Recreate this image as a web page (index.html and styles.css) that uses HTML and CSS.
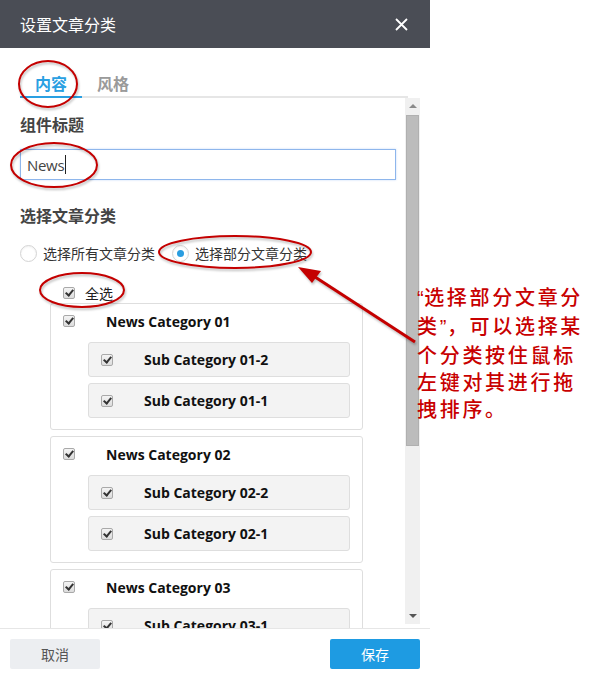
FILE: index.html
```html
<!DOCTYPE html>
<html lang="zh-CN">
<head>
    <meta charset="UTF-8">
    <meta name="viewport" content="width=device-width, initial-scale=1.0">
    <title>设置文章分类</title>
    <link rel="stylesheet" href="styles.css">
</head>
<body>
    <div class="page">
        <div class="dialog">
            <header class="dlg-head">
                <h1>设置文章分类</h1>
                <span class="close">
                    <svg width="13" height="13" viewBox="0 0 13 13"><path d="M1 1 L12 12 M12 1 L1 12" stroke="#fff" stroke-width="1.8" fill="none"/></svg>
                </span>
            </header>
            <div class="tabs">
                <a href="#" class="tab active">内容</a>
                <a href="#" class="tab">风格</a>
            </div>
            <div class="dlg-body">
                <div class="pane">
                    <h2 class="field-title">组件标题</h2>
                    <div class="input">News<span class="caret"></span></div>

                    <h2 class="field-title gap">选择文章分类</h2>
                    <div class="radios">
                        <label class="radio"><span class="dot"></span>选择所有文章分类</label>
                        <label class="radio on"><span class="dot"></span>选择部分文章分类</label>
                    </div>

                    <div class="cat-list">
                        <div class="row check-all"><span class="cb"></span><span class="cb-text">全选</span></div>

                        <div class="cat">
                            <div class="row cat-head"><span class="cb"></span><span class="name">News Category 01</span></div>
                            <div class="sub"><span class="cb"></span><span class="name">Sub Category 01-2</span></div>
                            <div class="sub"><span class="cb"></span><span class="name">Sub Category 01-1</span></div>
                        </div>
                        <div class="cat">
                            <div class="row cat-head"><span class="cb"></span><span class="name">News Category 02</span></div>
                            <div class="sub"><span class="cb"></span><span class="name">Sub Category 02-2</span></div>
                            <div class="sub"><span class="cb"></span><span class="name">Sub Category 02-1</span></div>
                        </div>
                        <div class="cat">
                            <div class="row cat-head"><span class="cb"></span><span class="name">News Category 03</span></div>
                            <div class="sub"><span class="cb"></span><span class="name">Sub Category 03-1</span></div>
                        </div>
                    </div>
                </div>
                <div class="scrollbar">
                    <span class="arrow up"></span>
                    <span class="thumb"></span>
                    <span class="rest"></span>
                    <span class="arrow down"></span>
                </div>
            </div>
            <footer class="dlg-foot">
                <button class="btn cancel">取消</button>
                <button class="btn save">保存</button>
            </footer>
        </div>

        <!-- red annotation marks -->
        <svg class="marks" width="595" height="679" viewBox="0 0 595 679">
            <g fill="none" stroke="#c40000" stroke-width="2">
                <ellipse cx="48" cy="84" rx="29" ry="23"/>
                <ellipse cx="54" cy="165" rx="43" ry="22"/>
                <ellipse cx="235" cy="252" rx="76" ry="16"/>
                <ellipse cx="82" cy="290" rx="42" ry="17"/>
                <path d="M415 342 L312 275" stroke-width="3"/>
            </g>
            <path d="M298 267 L321 271 L312 283 Z" fill="#c40000"/>
        </svg>
        <p class="note"><span class="q">“</span>选择部分文章分<br>类<span class="q">”</span>，可以选择某<br>个分类按住鼠标<br>左键对其进行拖<br>拽排序。</p>
    </div>
</body>
</html>
```

FILE: styles.css
```css
body, html {
    margin: 0;
    padding: 0;
    background: #fff;
    font-family: "Noto Sans CJK SC", "Open Sans", sans-serif;
    color: #333;
}
.page {
    position: relative;
    width: 595px;
    height: 679px;
    overflow: hidden;
}
.dialog {
    width: 430px;
    height: 679px;
    display: flex;
    flex-direction: column;
    background: #fff;
}
.dlg-head {
    height: 48px;
    flex-shrink: 0;
    background-color: #4a4d55;
    padding: 0 22px 0 20px;
    display: flex;
    justify-content: space-between;
    align-items: center;
}
.dlg-head h1 {
    margin: 0;
    font-size: 16px;
    font-weight: normal;
    color: #fff;
}
.close {
    display: flex;
}
.tabs {
    height: 48px;
    flex-shrink: 0;
    margin: 0 22px 0 20px;
    display: flex;
    align-items: flex-end;
    border-bottom: 2px solid #e6e6e6;
}
.tab {
    padding: 0 15px 3px;
    line-height: 20px;
    font-size: 16px;
    font-weight: bold;
    color: #9a9a9a;
    text-decoration: none;
    margin-bottom: -2px;
    border-bottom: 2px solid transparent;
}
.tab.active {
    color: #2aa0e2;
    border-bottom-color: #2aa0e2;
}
.dlg-body {
    flex: 1;
    display: flex;
    min-height: 0;
}
.pane {
    flex: 1;
    padding: 15px 9px 0 20px;
    overflow: hidden;
}
.field-title {
    margin: 0;
    font-size: 16px;
    line-height: 22px;
    font-weight: bold;
    color: #444;
}
.field-title.gap {
    margin-top: 24px;
}
.input {
    margin-top: 14px;
    height: 29px;
    border: 1px solid #8eb6ec;
    box-shadow: 0 0 2px rgba(82, 150, 236, 0.35);
    padding-left: 6px;
    display: flex;
    align-items: center;
    font-family: "Open Sans", sans-serif;
    font-size: 15px;
    color: #444;
    letter-spacing: -0.3px;
}
.caret {
    width: 1px;
    height: 19px;
    background: #222;
    margin-left: 1px;
}
.radios {
    margin-top: 17px;
    height: 20px;
    display: flex;
    align-items: center;
    gap: 17px;
}
.radio {
    display: flex;
    align-items: center;
    gap: 6px;
    font-size: 14px;
    color: #333;
}
.dot {
    width: 15px;
    height: 15px;
    border: 1px solid #d4d4d4;
    border-radius: 50%;
    background: #fff;
    box-shadow: inset 0 1px 2px rgba(0, 0, 0, 0.06);
    position: relative;
}
.radio.on .dot::after {
    content: '';
    position: absolute;
    left: 4px;
    top: 4px;
    width: 7px;
    height: 7px;
    border-radius: 50%;
    background: #2a9de0;
}
.cat-list {
    margin: 20px 0 0 30px;
    width: 313px;
}
.row {
    display: flex;
    align-items: center;
}
.check-all {
    height: 20px;
    padding-left: 13px;
}
.cb-text {
    margin-left: 10px;
    font-size: 14px;
    color: #222;
}
.cb {
    width: 10px;
    height: 10px;
    border: 1px solid #a9a9a9;
    border-radius: 2px;
    background: linear-gradient(#f4f4f4, #dcdcdc);
    position: relative;
    flex-shrink: 0;
}
.cb::after {
    content: '';
    position: absolute;
    left: 3px;
    top: 0px;
    width: 3px;
    height: 6px;
    border: solid #333;
    border-width: 0 2px 2px 0;
    transform: rotate(40deg);
}
.name {
    margin-left: 31px;
    font-family: "Open Sans", sans-serif;
    font-size: 14px;
    font-weight: bold;
    color: #111;
}
.cat {
    border: 1px solid #dedede;
    border-radius: 3px;
    padding-bottom: 11px;
    margin-bottom: 6px;
}
.cat-head {
    height: 34px;
    padding-left: 12px;
}
.sub {
    margin: 4px 12px 0 37px;
    height: 33px;
    border: 1px solid #dedede;
    border-radius: 3px;
    background: #f3f3f3;
    padding-left: 12px;
    display: flex;
    align-items: center;
}
.sub + .sub {
    margin-top: 6px;
}
.scrollbar {
    width: 15px;
    height: 526px;
    margin-right: 10px;
    background: #f0f0f0;
    display: flex;
    flex-direction: column;
    align-items: center;
}
.arrow {
    height: 17px;
    width: 100%;
    position: relative;
}
.arrow::after {
    content: '';
    position: absolute;
    left: 4px;
    border-left: 4px solid transparent;
    border-right: 4px solid transparent;
}
.arrow.up::after {
    top: 6px;
    border-bottom: 4px solid #8a8a8a;
}
.arrow.down::after {
    top: 7px;
    border-top: 4px solid #555;
}
.thumb {
    width: 11px;
    height: 329px;
    background: #bcbcbc;
    border: 1px solid #b0b0b0;
}
.rest {
    flex: 1;
}
.dlg-foot {
    flex-shrink: 0;
    border-top: 1px solid #e6e6e6;
    padding: 10px;
    display: flex;
    justify-content: space-between;
}
.btn {
    width: 90px;
    height: 30px;
    border: none;
    border-radius: 2px;
    font-family: "Noto Sans CJK SC", sans-serif;
    font-size: 14px;
    cursor: pointer;
}
.btn.cancel {
    background: #eceef1;
    color: #555;
}
.btn.save {
    background: #1e9be2;
    color: #fff;
}
.marks {
    position: absolute;
    left: 0;
    top: 0;
    pointer-events: none;
    filter: drop-shadow(1px 2px 1px rgba(0, 0, 0, 0.25));
}
.note {
    position: absolute;
    left: 417px;
    top: 283px;
    margin: 0;
    font-size: 20px;
    font-weight: 500;
    line-height: 27px;
    letter-spacing: 2.7px;
    color: #c80000;
    white-space: nowrap;
}
.note .q {
    font-family: "Liberation Sans", sans-serif;
    letter-spacing: 0.5px;
}
```
